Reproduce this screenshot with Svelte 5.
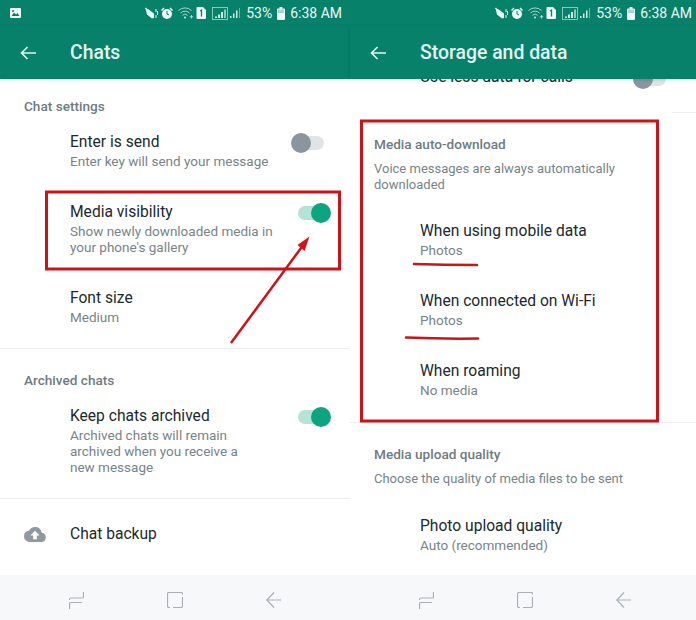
<script>
    const chatRows = [
        { title: 'Enter is send', sub: ['Enter key will send your message'], toggle: 'off' },
        { title: 'Media visibility', sub: ['Show newly downloaded media in', "your phone's gallery"], toggle: 'on' },
        { title: 'Font size', sub: ['Medium'] }
    ];
    const downloadRows = [
        { title: 'When using mobile data', sub: ['Photos'] },
        { title: 'When connected on Wi-Fi', sub: ['Photos'] },
        { title: 'When roaming', sub: ['No media'] }
    ];
</script>

{#snippet statusBar(showPicture)}
    <div class="status">
        {#if showPicture}
            <svg class="pic" width="11" height="10" viewBox="0 0 11 10">
                <rect width="11" height="10" rx="1" fill="#f1f8f6" />
                <path d="M1.5 8 4 4.5 6 6.5 7.5 5 9.5 8z" fill="#0b7f68" />
                <circle cx="3" cy="3" r="1" fill="#0b7f68" />
            </svg>
        {/if}
        <div class="status-right">
            <svg class="ic-mute" width="14" height="13" viewBox="0 0 14 13" fill="#eef8f5">
                <path d="M2 3.500 4 2 10 6.500 10 10.500 8 11.500 3 7.500z" />
                <path d="M1 1.500 2 .5l8 10-1 1z" />
                <path d="M12 2v3M13.500 4v4M12 8v3" stroke="#eef8f5" fill="none" />
            </svg>
            <svg class="ic-alarm" width="12" height="13" viewBox="0 0 12 13" fill="#eef8f5">
                <circle cx="6" cy="7" r="5" />
                <path d="M0 3l2.500-2.500 1 1-2.500 2.500zM12 3 9.500.5l-1 1 2.500 2.500z" />
                <path d="M6 4v3l2 1" stroke="#0b7f68" fill="none" />
            </svg>
            <svg class="ic-wifi" width="16" height="12" viewBox="0 0 16 12" fill="none" stroke="#cfe9e2" stroke-width=".8">
                <path d="M.5 3.500a9.500 9.500 0 0 1 13 0M2.500 6a6.500 6.500 0 0 1 9 0M4.500 8.300a3.500 3.500 0 0 1 5 0" />
                <circle cx="7" cy="10.500" r="1" fill="#cfe9e2" stroke="none" />
                <path d="M13.500 8v3.500M11.700 9.800h3.600" />
            </svg>
            <svg class="ic-sim" width="10" height="12" viewBox="0 0 10 12">
                <path d="M1.500 0H7l3 3v8a1 1 0 0 1-1 1H1.500a1 1 0 0 1-1-1V1a1 1 0 0 1 1-1z" fill="#f1f8f6" />
                <path d="M4 4l1.500-.8V9.500" stroke="#0b7f68" stroke-width="1.300" fill="none" />
            </svg>
            <svg class="ic-signal" width="16" height="13" viewBox="0 0 16 13">
                <rect x=".5" y=".5" width="15" height="12" fill="none" stroke="#a8d8cc" stroke-width=".8" />
                <path d="M3 11h2V9.500H3zM6 11h2V7.500H6zM9 11h2V5H9z" fill="#cfe9e2" />
                <path d="M12 11h2V2.500h-2z" fill="#8cc9ba" />
            </svg>
            <svg class="ic-bars" width="10" height="12" viewBox="0 0 10 12" fill="#cfe9e2">
                <rect x="0" y="9" width="1.500" height="2" />
                <rect x="3" y="6.500" width="1.500" height="4.500" />
                <rect x="6" y="3.500" width="1.500" height="7.500" />
                <rect x="9" y="1" width="1" height="10" opacity=".5" />
            </svg>
            <span class="pct">53%</span>
            <svg class="ic-batt" width="8" height="13" viewBox="0 0 8 13">
                <path d="M2.500 0h3v1.500H7a1 1 0 0 1 1 1V12a1 1 0 0 1-1 1H1a1 1 0 0 1-1-1V2.500a1 1 0 0 1 1-1h1.500z" fill="#f1f8f6" />
                <rect x="1" y="2.500" width="6" height="3.500" fill="#a9d6ca" />
            </svg>
            <span class="time">6:38 AM</span>
        </div>
    </div>
{/snippet}

{#snippet toolbar(title)}
    <div class="toolbar">
        <svg width="16" height="14" viewBox="0 0 16 14" fill="none" stroke="#e6f5f0" stroke-width="1.600">
            <path d="M16 7H1.500M7.500 1 1.500 7l6 6" />
        </svg>
        <span class="bar-title">{title}</span>
    </div>
{/snippet}

{#snippet navBar()}
    <div class="nav">
        <svg width="15" height="17" viewBox="0 0 15 17" fill="none" stroke="#a9b0b4" stroke-width="1.200">
            <path d="M14.500 0v4.500q0 1.500-1.500 1.500H2Q.5 6 .5 8M.5 17v-5q0-1.500 1.500-1.500h11" />
        </svg>
        <svg width="16" height="16" viewBox="0 0 16 16" fill="none" stroke="#a9b0b4" stroke-width="1.200">
            <path d="M15.500 2.500V2q0-1.500-1.500-1.500H2Q.5.500.5 2v12q0 1.500 1.500 1.500h1M6 15.500h8q1.500 0 1.500-1.500V5" />
        </svg>
        <svg width="15" height="16" viewBox="0 0 15 16" fill="none" stroke="#a9b0b4" stroke-width="1.200">
            <path d="M15 8H1M8 .5 .8 8 8 15.500" />
        </svg>
    </div>
{/snippet}

{#snippet row(item)}
    <div class="row">
        <div class="row-text">
            <div class="title">{item.title}</div>
            <div class="sub">
                {#each item.sub as line}
                    <div>{line}</div>
                {/each}
            </div>
        </div>
        {#if item.toggle}
            <div class="toggle {item.toggle}"><span class="knob"></span></div>
        {/if}
    </div>
{/snippet}

<div class="page">
    <section class="phone">
        {@render statusBar(true)}
        {@render toolbar('Chats')}
        <div class="list">
            <div class="group first">
                <h3>Chat settings</h3>
                {#each chatRows as item}
                    {@render row(item)}
                {/each}
            </div>
            <div class="group">
                <h3>Archived chats</h3>
                {@render row({
                    title: 'Keep chats archived',
                    sub: ['Archived chats will remain', 'archived when you receive a', 'new message'],
                    toggle: 'on'
                })}
            </div>
            <div class="backup">
                <svg width="22" height="15" viewBox="0 0 24 16" preserveAspectRatio="none">
                    <path fill="#8f9a9e" d="M19.350 6.040A7.490 7.490 0 0 0 12 0 7.500 7.500 0 0 0 5.350 4.040 6 6 0 0 0 0 10a6 6 0 0 0 6 6h13a5 5 0 0 0 .35-9.960zM14 9v4h-4V9H7l5-5 5 5h-3z" />
                </svg>
                <span class="title">Chat backup</span>
            </div>
        </div>
        {@render navBar()}
    </section>

    <section class="phone">
        {@render statusBar(false)}
        {@render toolbar('Storage and data')}
        <div class="list">
            <div class="scrolled">
                <div class="row top-row">
                    <div class="title">Use less data for calls</div>
                    <div class="toggle off clipped"><span class="knob"></span></div>
                </div>
                <div class="group tall">
                    <h3>Media auto-download</h3>
                    <p class="note">Voice messages are always automatically<br />downloaded</p>
                    <div class="rows-a">
                        {#each downloadRows as item}
                            {@render row(item)}
                        {/each}
                    </div>
                </div>
                <div class="group">
                    <h3>Media upload quality</h3>
                    <p class="note">Choose the quality of media files to be sent</p>
                    <div class="rows-b">
                        {@render row({ title: 'Photo upload quality', sub: ['Auto (recommended)'] })}
                    </div>
                </div>
            </div>
        </div>
        {@render navBar()}
    </section>

    <svg class="marks" width="696" height="620" viewBox="0 0 696 620" fill="none" stroke="#cc1318">
        <path d="M350 112.500H672" stroke="#fff" stroke-width="2" />
        <rect x="46.500" y="192" width="293" height="77" stroke-width="3" />
        <rect x="361.500" y="121" width="296" height="300" stroke-width="3" />
        <path d="M231 343 304 244" stroke-width="2.500" />
        <path d="M309.500 236.500 297.500 245 304.500 251z" fill="#dd1018" stroke="none" />
        <path d="M414 264q30 1 63 1" stroke-width="2.500" stroke-linecap="round" />
        <path d="M406 337.500q36 1.500 72 1" stroke-width="2.500" stroke-linecap="round" />
    </svg>
</div>

<style>
    :global(body) {
        margin: 0;
        background: #fff;
    }

    .page {
        position: relative;
        display: flex;
        width: 696px;
        height: 620px;
        overflow: hidden;
        font-family: Roboto, "Liberation Sans", sans-serif;
    }

    .phone {
        flex: none;
        width: 350px;
        height: 620px;
        display: flex;
        flex-direction: column;
    }

    .status {
        height: 26px;
        flex: none;
        display: flex;
        align-items: center;
        padding: 0 8px 0 10px;
        background: #07816a;
        color: #eef8f5;
        font-size: 14px;
    }

    .status-right {
        margin-left: auto;
        display: flex;
        align-items: center;
    }

    .ic-alarm { margin-left: 3px; }
    .ic-wifi { margin-left: 5px; }
    .ic-sim { margin-left: 2px; }
    .ic-signal { margin-left: 6px; }
    .ic-bars { margin-left: 2px; }
    .pct { margin-left: 6px; }
    .ic-batt { margin-left: 5px; }
    .time { margin-left: 5px; }

    .toolbar {
        height: 53px;
        flex: none;
        position: relative;
        z-index: 1;
        display: flex;
        align-items: center;
        padding-left: 20px;
        background: #07816a;
        box-shadow: 0 1px 3px rgba(0, 0, 0, 0.15);
    }

    .bar-title {
        margin-left: 34px;
        color: #e3f4ef;
        font-size: 19.400px;
        font-weight: 500;
    }

    .list {
        flex: 1;
        min-height: 0;
        overflow: hidden;
        background: #fff;
    }

    .scrolled {
        margin-top: -28px;
    }

    .group {
        padding: 22px 0 7px;
        border-bottom: 1px solid #eceeef;
    }

    .group.first {
        padding-top: 18px;
    }

    .group.tall {
        padding-bottom: 8px;
    }

    h3 {
        margin: 0;
        padding-left: 24px;
        color: #6f7b81;
        font-size: 13.600px;
        font-weight: 500;
        line-height: 18px;
    }

    .note {
        margin: 8px 0 0;
        padding-left: 24px;
        color: #78848a;
        font-size: 13px;
        line-height: 16px;
    }

    .rows-a {
        padding-top: 11px;
    }

    .rows-b {
        padding-top: 12px;
    }

    .row {
        display: flex;
        align-items: flex-start;
        justify-content: space-between;
        padding: 16px 26px 16px 70px;
    }

    .top-row {
        padding-bottom: 25px;
        border-bottom: 1px solid #eceeef;
    }

    .title {
        color: #20292d;
        font-size: 15.600px;
        line-height: 20px;
    }

    .row-text .title {
        padding-top: 1px;
        margin-bottom: -1px;
    }

    .sub {
        margin-top: 2px;
        color: #78848a;
        font-size: 13.500px;
        line-height: 16px;
    }

    .toggle {
        position: relative;
        flex: none;
        width: 26px;
        height: 14px;
        margin-top: 5px;
        border-radius: 7px;
    }

    .knob {
        position: absolute;
        top: -3px;
        width: 20px;
        height: 20px;
        border-radius: 50%;
    }

    .toggle.off {
        background: #e1e4e6;
    }

    .toggle.off .knob {
        left: -7px;
        background: #8a959d;
    }

    .toggle.on {
        background: #b5e3d7;
    }

    .toggle.on .knob {
        right: -7px;
        background: #0da580;
    }

    .toggle.clipped {
        margin-right: 8px;
    }

    .backup {
        display: flex;
        align-items: center;
        padding: 25px 0 0 24px;
    }

    .backup svg {
        flex: none;
    }

    .backup .title {
        margin-left: 24px;
    }

    .nav {
        height: 40px;
        flex: none;
        display: grid;
        grid-template-columns: 15px 16px 15px;
        justify-content: start;
        column-gap: 83px;
        align-items: center;
        padding: 5px 0 0 69px;
        background: #f6f8f9;
    }

    .marks {
        position: absolute;
        left: 0;
        top: 0;
        pointer-events: none;
    }
</style>
